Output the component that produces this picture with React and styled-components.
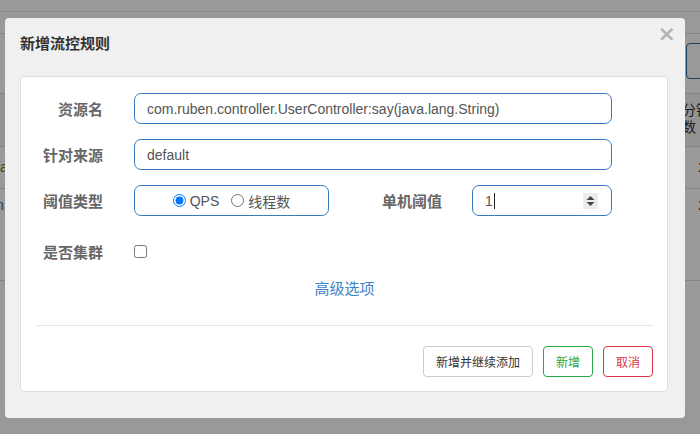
import React from 'react'
import styled, { createGlobalStyle } from 'styled-components'

const GlobalStyle = createGlobalStyle`
  html, body {
    margin: 0;
    padding: 0;
    background: #fff;
  }
  body {
    font-family: "Liberation Sans", "Noto Sans CJK SC", sans-serif;
    color: #333;
  }
`

const Page = styled.div`
  position: relative;
  width: 700px;
  height: 434px;
  overflow: hidden;
  background: #fff;
`

// the list page that lies behind the dialog
const BgTop = styled.div`
  height: 11px;
  border-bottom: 1px solid #e8e8e8;
`

const BgRow = styled.div`
  display: flex;
  justify-content: space-between;
  align-items: ${p => p.$align || 'center'};
  height: ${p => p.$h}px;
  border-bottom: 1px solid #ddd;
  background: ${p => p.$shade ? '#f5f5f5' : '#fff'};
  font-size: 14px;
  color: #333;
  box-sizing: border-box;
`

const BgText = styled.span`
  margin-left: ${p => p.$left || 0}px;
  margin-right: ${p => p.$right || 0}px;
  line-height: 17px;
  padding-top: ${p => p.$top || 0}px;
  color: ${p => p.$color || '#333'};
`

const BgButton = styled.div`
  width: 40px;
  height: 34px;
  margin-right: -28px;
  border: 1px solid #2e6da4;
  border-radius: 4px;
  margin-top: 9px;
`

const Backdrop = styled.div`
  position: absolute;
  inset: 0;
  background: rgba(0, 0, 0, 0.4);
`

const Modal = styled.div`
  position: absolute;
  left: 5px;
  top: 18px;
  width: 680px;
  height: 400px;
  box-sizing: border-box;
  background: #f0f0f0;
  border-radius: 4px;
  display: flex;
  flex-direction: column;
  padding: 0 17px 26px 15px;
`

const Header = styled.div`
  display: flex;
  justify-content: space-between;
  align-items: flex-start;
  height: 58px;
`

const Title = styled.h3`
  margin: 17px 0 0;
  font-size: 15px;
  font-weight: bold;
  color: #333;
  line-height: 18px;
`

const Close = styled.span`
  margin: 4px -8px 0 0;
  font-size: 22px;
  font-weight: bold;
  color: #b3b3b3;
  line-height: 24px;
  font-family: "DejaVu Sans", sans-serif;
`

const Panel = styled.div`
  flex: 1;
  background: #fff;
  border: 1px solid #ddd;
  border-radius: 4px;
  padding: 16px 14px 14px 15px;
  display: flex;
  flex-direction: column;
`

const Row = styled.div`
  display: flex;
  align-items: center;
  height: ${p => p.$h || 31}px;
  margin-bottom: 15px;
`

const Label = styled.label`
  width: ${p => p.$w || 82}px;
  margin-right: ${p => p.$gap || 31}px;
  margin-left: -15px;
  text-align: right;
  font-size: 15px;
  font-weight: bold;
  color: #666;
  flex-shrink: 0;
`

const Field = styled.div`
  box-sizing: border-box;
  width: ${p => p.$w}px;
  height: 31px;
  border: 1px solid #3a7bbf;
  border-radius: 7px;
  display: flex;
  align-items: center;
  justify-content: ${p => p.$center ? 'center' : 'flex-start'};
  padding: 0 12px;
  font-size: 14px;
  color: #555;
  gap: 4px;
`

const FieldText = styled.span`
  flex: 1;
  white-space: nowrap;
  overflow: hidden;
`

const Caret = styled.span`
  display: inline-block;
  width: 1px;
  height: 16px;
  background: #222;
  vertical-align: -3px;
  margin-left: 1px;
`

const Spinner = styled.span`
  width: 15px;
  height: 16px;
  background: #ececec;
  display: flex;
  align-items: center;
  justify-content: center;
  margin-right: 1px;
`

const RadioLabel = styled.label`
  display: inline-flex;
  align-items: center;
  font-size: 14px;
  color: #555;
  margin-right: ${p => p.$mr || 0}px;
  input {
    margin: 0 4px 0 0;
    width: 13px;
    height: 13px;
  }
`

const Checkbox = styled.input`
  margin: 0;
  width: 13px;
  height: 13px;
`

const AdvancedLink = styled.a`
  align-self: center;
  margin: -7px 0 0;
  font-size: 15px;
  line-height: 20px;
  color: #3b82c6;
  text-decoration: none;
  cursor: pointer;
`

const Divider = styled.hr`
  margin: 26px 0 20px;
  border: 0;
  border-top: 1px solid #e5e5e5;
`

const Footer = styled.div`
  display: flex;
  justify-content: flex-end;
  gap: 10px;
`

const tones = {
  default: { color: '#333', border: '#ccc' },
  success: { color: '#28a745', border: '#28a745' },
  danger: { color: '#dc3545', border: '#dc3545' },
}

const Button = styled.button`
  height: 31px;
  padding: 0 ${p => p.$pad || 12}px;
  min-width: 50px;
  background: #fff;
  font-family: "Liberation Sans", "Noto Sans CJK SC", sans-serif;
  font-size: 12px;
  color: ${p => tones[p.$tone].color};
  border: 1px solid ${p => tones[p.$tone].border};
  border-radius: 4px;
  cursor: pointer;
`

const SpinIcon = () => (
  <svg width="9" height="12" viewBox="0 0 9 12">
    <path d="M4.5 1 L8.5 5 H0.5 Z" fill="#444" />
    <path d="M4.5 11 L8.5 7 H0.5 Z" fill="#444" />
  </svg>
)

const Background = () => (
  <>
    <BgTop />
    <BgRow $h={22} />
    <BgRow $h={60} $align="flex-start">
      <span />
      <BgButton />
    </BgRow>
    <BgRow $h={53} $shade $align="flex-start">
      <span />
      <BgText $right={-10} $top={8}>分钟<br />数</BgText>
    </BgRow>
    <BgRow $h={42}>
      <BgText $left={-4} $color="#8a6d3b">fa</BgText>
      <BgText $right={-6}>2</BgText>
    </BgRow>
    <BgRow $h={92} $align="flex-start">
      <BgText $left={-4} $top={8} $color="#2e6da4">n.</BgText>
      <BgText $right={-6} $top={8}>2</BgText>
    </BgRow>
  </>
)

export default function App() {
  return (
    <Page>
      <GlobalStyle />
      <Background />
      <Backdrop />
      <Modal>
        <Header>
          <Title>新增流控规则</Title>
          <Close>×</Close>
        </Header>
        <Panel>
          <Row>
            <Label>资源名</Label>
            <Field $w={478}>
              <FieldText>com.ruben.controller.UserController:say(java.lang.String)</FieldText>
            </Field>
          </Row>
          <Row>
            <Label>针对来源</Label>
            <Field $w={478}>
              <FieldText>default</FieldText>
            </Field>
          </Row>
          <Row>
            <Label>阈值类型</Label>
            <Field $w={195} $center>
              <RadioLabel $mr={8}>
                <input type="radio" name="grade" defaultChecked />QPS
              </RadioLabel>
              <RadioLabel>
                <input type="radio" name="grade" />线程数
              </RadioLabel>
            </Field>
            <Label $w={128} $gap={30}>单机阈值</Label>
            <Field $w={140}>
              <FieldText>1<Caret /></FieldText>
              <Spinner><SpinIcon /></Spinner>
            </Field>
          </Row>
          <Row $h={40}>
            <Label>是否集群</Label>
            <Checkbox type="checkbox" />
          </Row>
          <AdvancedLink>高级选项</AdvancedLink>
          <Divider />
          <Footer>
            <Button $tone="default">新增并继续添加</Button>
            <Button $tone="success">新增</Button>
            <Button $tone="danger">取消</Button>
          </Footer>
        </Panel>
      </Modal>
    </Page>
  )
}
